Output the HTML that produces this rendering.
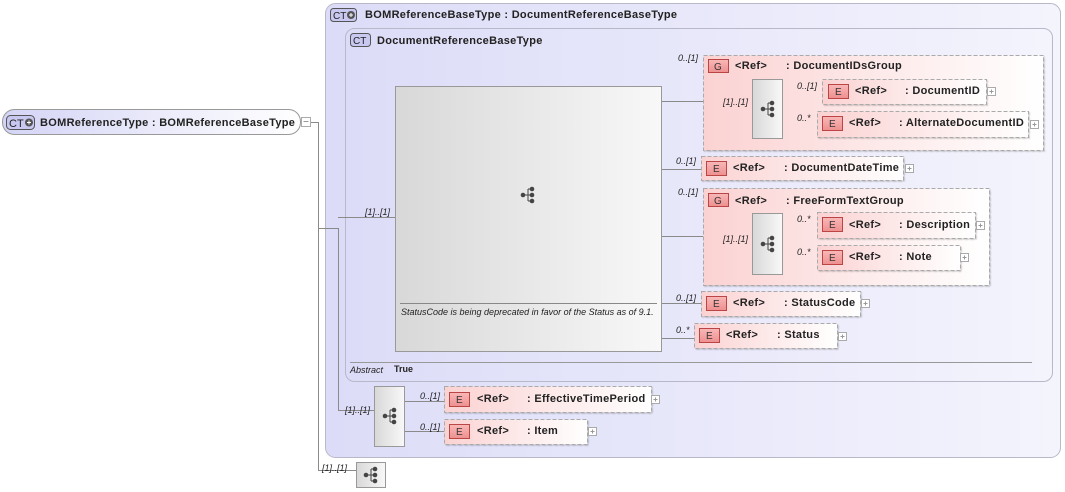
<!DOCTYPE html>
<html><head><meta charset="utf-8"><style>
html,body{margin:0;padding:0;background:#fff;}
svg{display:block;font-family:"Liberation Sans",sans-serif;}
.b{font-weight:bold;font-size:11px;fill:#222;letter-spacing:0.3px;}
.m{font-style:italic;font-size:9px;fill:#222;}
.ln{stroke:#8a8a8a;stroke-width:1;fill:none;}
rect[stroke-dasharray]{filter:drop-shadow(1.5px 1.5px 0.5px rgba(0,0,0,0.18));}
</style></head><body>
<svg width="1065" height="492" viewBox="0 0 1065 492" xmlns="http://www.w3.org/2000/svg">
<defs>
<linearGradient id="pk" x1="0" x2="1"><stop offset="0" stop-color="#fbd2d2"/><stop offset="1" stop-color="#fff"/></linearGradient>
<linearGradient id="gr" x1="0" x2="1"><stop offset="0" stop-color="#d8d8d8"/><stop offset="1" stop-color="#f8f8f8"/></linearGradient>
<linearGradient id="pl" x1="0" x2="1"><stop offset="0" stop-color="#dcdcf8"/><stop offset="1" stop-color="#f4f4fd"/></linearGradient>
<linearGradient id="rt" x1="0" x2="1"><stop offset="0" stop-color="#d4d4f6"/><stop offset="1" stop-color="#fff"/></linearGradient>
<linearGradient id="eb" x1="0" x2="0" y1="0" y2="1"><stop offset="0" stop-color="#f9b8b8"/><stop offset="1" stop-color="#ee8f8f"/></linearGradient>
<g id="seqi"><circle cx="0" cy="0" r="2.3" fill="#444"/><path d="M0 0H5M5 -6V6M5 -6H9M5 0H9M5 6H9" stroke="#444" fill="none"/><circle cx="9" cy="-6" r="2.3" fill="#444"/><circle cx="9" cy="0" r="2.3" fill="#444"/><circle cx="9" cy="6" r="2.3" fill="#444"/></g>
<g id="plus"><rect x="0.5" y="0.5" width="8" height="8" fill="#fff" stroke="#aaa"/><path d="M2.5 4.5H6.5M4.5 2.5V6.5" stroke="#999"/></g>
</defs>

<rect x="325.5" y="3.5" width="735" height="454" rx="10" fill="url(#pl)" stroke="#b8b8c8"/>
<rect x="330.5" y="8.5" width="26" height="13" rx="3" fill="#c8c8f0" stroke="#555"/>
<text x="333" y="19" font-size="10" fill="#222">CT</text><circle cx="351" cy="15" r="4" fill="#555"/><path d="M349 15h4M351 13v4" stroke="#fff"/>
<text x="365" y="18" class="b">BOMReferenceBaseType : DocumentReferenceBaseType</text>

<rect x="345.5" y="28.5" width="707" height="353" rx="9" fill="url(#pl)" stroke="#b8b8c8"/>
<rect x="350.5" y="33.5" width="20" height="13" rx="3" fill="#c8c8f0" stroke="#555"/>
<text x="353" y="44" font-size="10" fill="#222">CT</text>
<text x="377" y="44" class="b">DocumentReferenceBaseType</text>
<line x1="350" y1="362.5" x2="1032" y2="362.5" stroke="#999"/>
<text x="350" y="373" class="m">Abstract</text><text x="394" y="372" font-size="9" font-weight="bold" fill="#222">True</text>

<rect x="2.5" y="109.5" width="298" height="25" rx="12" fill="url(#rt)" stroke="#999"/>
<rect x="6.5" y="115.5" width="28" height="14" rx="4" fill="#c8c8f0" stroke="#555"/>
<text x="9" y="127" font-size="11" fill="#222">CT</text><circle cx="29" cy="122.5" r="4" fill="#555"/><path d="M27 122.5h4M29 120.5v4" stroke="#fff"/>
<text x="40" y="126" class="b">BOMReferenceType : BOMReferenceBaseType</text>
<rect x="301.5" y="117.5" width="9" height="9" fill="#fff" stroke="#aaa"/><path d="M303.5 121.5h5" stroke="#999"/>

<path class="ln" d="M311 122.5H318.5V470.5H356M318 228.5H338.5V410.5H374M338 217.5H395"/>
<text x="365" y="215" class="m">[1]..[1]</text>
<text x="345" y="413" class="m">[1]..[1]</text>
<text x="322" y="471" class="m">[1]..[1]</text>
<path class="ln" d="M661 101.5H703M661 169.5H701M661 236.5H703M661 303.5H701M661 338.5H694"/>
<path class="ln" d="M704 110.5H752M782 91.5H822M782 124.5H817M704 245.5H752M782 225.5H817M782 258.5H817M404 401.5H444M404 431.5H444"/>

<rect x="395.5" y="86.5" width="266" height="265" fill="url(#gr)" stroke="#999"/>
<use href="#seqi" x="523" y="195"/>
<line x1="400" y1="303.5" x2="657" y2="303.5" stroke="#888"/>
<text x="401" y="315" class="m">StatusCode is being deprecated in favor of the Status as of 9.1.</text>

<rect x="703.5" y="55.5" width="340" height="95" fill="url(#pk)" stroke="#aaa" stroke-dasharray="4,2"/>
<text x="678" y="61" class="m">0..[1]</text>
<rect x="708.5" y="59.5" width="20" height="13" fill="url(#eb)" stroke="#b44"/><text x="714" y="70" font-size="10" fill="#333">G</text>
<text x="735" y="69" class="b">&lt;Ref&gt;</text><text x="786" y="69" class="b">: DocumentIDsGroup</text>
<rect x="752.5" y="79.5" width="30" height="59" fill="url(#gr)" stroke="#999"/><use href="#seqi" x="763" y="109"/>
<text x="723" y="105" class="m">[1]..[1]</text>

<text x="797" y="89" class="m">0..[1]</text>
<rect x="822.5" y="79.5" width="164" height="25" fill="url(#pk)" stroke="#aaa" stroke-dasharray="4,2"/>
<rect x="828.5" y="84.5" width="20" height="14" fill="url(#eb)" stroke="#b44"/><text x="835" y="95" font-size="10" fill="#333">E</text>
<text x="855" y="94" class="b">&lt;Ref&gt;</text><text x="905" y="94" class="b">: DocumentID</text><use href="#plus" x="987" y="87"/>

<text x="797" y="121" class="m">0..*</text>
<rect x="817.5" y="111.5" width="211" height="26" fill="url(#pk)" stroke="#aaa" stroke-dasharray="4,2"/>
<rect x="822.5" y="116.5" width="20" height="14" fill="url(#eb)" stroke="#b44"/><text x="829" y="127" font-size="10" fill="#333">E</text>
<text x="849" y="126" class="b">&lt;Ref&gt;</text><text x="899" y="126" class="b">: AlternateDocumentID</text><use href="#plus" x="1030" y="120"/>

<text x="676" y="164" class="m">0..[1]</text>
<rect x="701.5" y="156.5" width="202" height="24" fill="url(#pk)" stroke="#aaa" stroke-dasharray="4,2"/>
<rect x="706.5" y="161.5" width="20" height="14" fill="url(#eb)" stroke="#b44"/><text x="713" y="172" font-size="10" fill="#333">E</text>
<text x="733" y="171" class="b">&lt;Ref&gt;</text><text x="784" y="171" class="b">: DocumentDateTime</text><use href="#plus" x="905" y="164"/>

<rect x="703.5" y="188.5" width="286" height="97" fill="url(#pk)" stroke="#aaa" stroke-dasharray="4,2"/>
<text x="678" y="195" class="m">0..[1]</text>
<rect x="708.5" y="193.5" width="20" height="13" fill="url(#eb)" stroke="#b44"/><text x="714" y="204" font-size="10" fill="#333">G</text>
<text x="735" y="204" class="b">&lt;Ref&gt;</text><text x="786" y="204" class="b">: FreeFormTextGroup</text>
<rect x="752.5" y="213.5" width="30" height="61" fill="url(#gr)" stroke="#999"/><use href="#seqi" x="763" y="244"/>
<text x="723" y="242" class="m">[1]..[1]</text>

<text x="797" y="222" class="m">0..*</text>
<rect x="817.5" y="212.5" width="158" height="26" fill="url(#pk)" stroke="#aaa" stroke-dasharray="4,2"/>
<rect x="822.5" y="217.5" width="20" height="14" fill="url(#eb)" stroke="#b44"/><text x="829" y="228" font-size="10" fill="#333">E</text>
<text x="849" y="228" class="b">&lt;Ref&gt;</text><text x="899" y="228" class="b">: Description</text><use href="#plus" x="976" y="221"/>

<text x="797" y="255" class="m">0..*</text>
<rect x="817.5" y="245.5" width="143" height="25" fill="url(#pk)" stroke="#aaa" stroke-dasharray="4,2"/>
<rect x="822.5" y="250.5" width="20" height="14" fill="url(#eb)" stroke="#b44"/><text x="829" y="261" font-size="10" fill="#333">E</text>
<text x="849" y="260" class="b">&lt;Ref&gt;</text><text x="899" y="260" class="b">: Note</text><use href="#plus" x="960" y="253"/>

<text x="676" y="301" class="m">0..[1]</text>
<rect x="701.5" y="291.5" width="159" height="25" fill="url(#pk)" stroke="#aaa" stroke-dasharray="4,2"/>
<rect x="706.5" y="296.5" width="20" height="14" fill="url(#eb)" stroke="#b44"/><text x="713" y="307" font-size="10" fill="#333">E</text>
<text x="733" y="306" class="b">&lt;Ref&gt;</text><text x="784" y="306" class="b">: StatusCode</text><use href="#plus" x="861" y="299"/>

<text x="676" y="333" class="m">0..*</text>
<rect x="694.5" y="323.5" width="143" height="25" fill="url(#pk)" stroke="#aaa" stroke-dasharray="4,2"/>
<rect x="699.5" y="328.5" width="20" height="14" fill="url(#eb)" stroke="#b44"/><text x="706" y="339" font-size="10" fill="#333">E</text>
<text x="726" y="338" class="b">&lt;Ref&gt;</text><text x="777" y="338" class="b">: Status</text><use href="#plus" x="838" y="332"/>

<rect x="374.5" y="386.5" width="30" height="60" fill="url(#gr)" stroke="#999"/><use href="#seqi" x="385" y="416"/>
<text x="420" y="399" class="m">0..[1]</text>
<rect x="444.5" y="386.5" width="207" height="26" fill="url(#pk)" stroke="#aaa" stroke-dasharray="4,2"/>
<rect x="449.5" y="392.5" width="20" height="14" fill="url(#eb)" stroke="#b44"/><text x="456" y="403" font-size="10" fill="#333">E</text>
<text x="477" y="402" class="b">&lt;Ref&gt;</text><text x="527" y="402" class="b">: EffectiveTimePeriod</text><use href="#plus" x="651" y="395"/>

<text x="420" y="430" class="m">0..[1]</text>
<rect x="444.5" y="419.5" width="143" height="25" fill="url(#pk)" stroke="#aaa" stroke-dasharray="4,2"/>
<rect x="449.5" y="424.5" width="20" height="14" fill="url(#eb)" stroke="#b44"/><text x="456" y="435" font-size="10" fill="#333">E</text>
<text x="477" y="434" class="b">&lt;Ref&gt;</text><text x="527" y="434" class="b">: Item</text><use href="#plus" x="588" y="427"/>

<rect x="356.5" y="462.5" width="29" height="25" fill="url(#gr)" stroke="#999"/><use href="#seqi" x="366" y="475"/>
</svg>
</body></html>
